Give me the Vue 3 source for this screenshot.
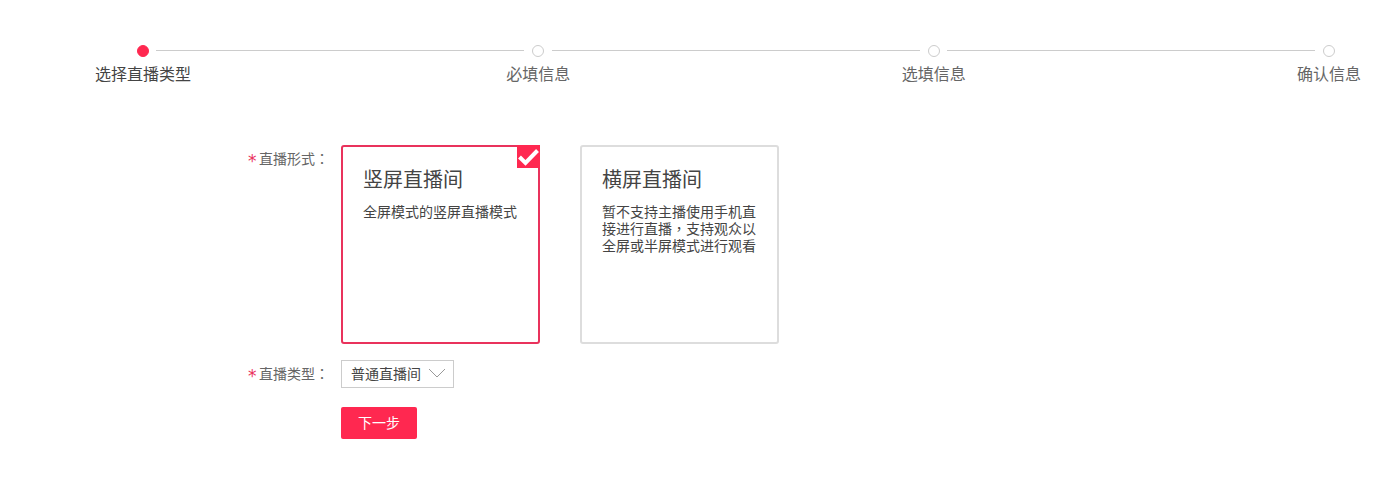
<template>
  <div class="page">
    <div class="steps">
      <template v-for="(step, i) in steps" :key="step">
        <div class="step" :class="{ active: i === 0 }">
          <span class="dot"></span>
          <span class="step-name">{{ step }}</span>
        </div>
        <span v-if="i < steps.length - 1" class="line"></span>
      </template>
    </div>

    <div class="form">
      <div class="form-row">
        <label class="form-label"><i>*</i>直播形式<span class="punct">：</span></label>
        <div class="cards">
          <div
            v-for="(card, i) in cards"
            :key="card.title"
            class="card"
            :class="{ selected: i === selected }"
            @click="selected = i"
          >
            <span v-if="i === selected" class="check">
              <svg width="23" height="23" viewBox="0 0 23 23">
                <path d="M2.5 12 L8.5 18 L20.5 5.5" fill="none" stroke="#fff" stroke-width="4" />
              </svg>
            </span>
            <h3>{{ card.title }}</h3>
            <p>
              <template v-for="(part, n) in card.desc" :key="n">
                <span v-if="n > 0" class="punct">，</span>{{ part }}
              </template>
            </p>
          </div>
        </div>
      </div>

      <div class="form-row type-row">
        <label class="form-label"><i>*</i>直播类型<span class="punct">：</span></label>
        <div class="select">
          <span>普通直播间</span>
          <svg width="18" height="10" viewBox="0 0 18 10">
            <path d="M1 1 L9 9 L17 1" fill="none" stroke="#999" stroke-width="1" />
          </svg>
        </div>
      </div>

      <button class="next-btn">下一步</button>
    </div>
  </div>
</template>

<script setup>
import { ref } from 'vue'

const steps = ['选择直播类型', '必填信息', '选填信息', '确认信息']

// desc is split on the comma so it can use the centred punctuation glyph
const cards = [
  { title: '竖屏直播间', desc: ['全屏模式的竖屏直播模式'] },
  { title: '横屏直播间', desc: ['暂不支持主播使用手机直接进行直播', '支持观众以全屏或半屏模式进行观看'] }
]

const selected = ref(0)
</script>

<style scoped>
.page {
  height: 493px;
  overflow: hidden;
  background: #fff;
  font-family: "Noto Sans CJK SC", "Liberation Sans", sans-serif;
  color: #444;
}

.steps {
  display: flex;
  align-items: flex-start;
  padding: 45px 45px 0 137px;
}

.step {
  width: 12px;
  display: flex;
  flex-direction: column;
  align-items: center;
  flex-shrink: 0;
}

.dot {
  width: 12px;
  height: 12px;
  box-sizing: border-box;
  border: 1px solid #ccc;
  border-radius: 50%;
  background: #fff;
}

.step.active .dot {
  border-color: #ff2850;
  background: #ff2850;
}

.step-name {
  margin-top: 4px;
  line-height: 24px;
  font-size: 16px;
  white-space: nowrap;
  color: #666;
}

.step.active .step-name {
  color: #444;
}

.line {
  flex: 1;
  height: 1px;
  margin: 5px 8px 0 7.45px;
  background: #ccc;
}

.form {
  padding: 60px 0 0 248px;
}

.form-row {
  display: flex;
  align-items: flex-start;
}

.form-label {
  width: 93px;
  flex-shrink: 0;
  padding-top: 3px;
  line-height: 20px;
  font-size: 14px;
  color: #666;
}

.form-label i {
  display: inline-block;
  width: 11px;
  font-family: "DejaVu Sans", sans-serif;
  font-size: 17px;
  line-height: 14px;
  font-style: normal;
  vertical-align: -3px;
  color: #e9325c;
}

.punct {
  font-family: "Noto Sans CJK TC", sans-serif;
}

.cards {
  display: flex;
  gap: 40px;
}

.card {
  position: relative;
  width: 199px;
  height: 199px;
  box-sizing: border-box;
  padding: 18px 20px 0;
  border: 2px solid #ddd;
  border-radius: 3px;
  cursor: pointer;
}

.card.selected {
  border-color: #e9325c;
}

.card h3 {
  margin: 0;
  line-height: 28px;
  font-size: 20px;
  font-weight: 400;
  color: #444;
}

.card p {
  margin: 10px 0 0;
  line-height: 17px;
  font-size: 14px;
  color: #444;
}

.check {
  position: absolute;
  top: -2px;
  right: -2px;
  display: flex;
  width: 23px;
  height: 23px;
  background: #ff2850;
}

.type-row {
  margin-top: 16px;
}

.select {
  display: flex;
  align-items: center;
  justify-content: space-between;
  width: 113px;
  height: 28px;
  box-sizing: border-box;
  padding: 0 7px 2px 9px;
  border: 1px solid #ccc;
  font-size: 14px;
  color: #444;
}

.next-btn {
  display: block;
  width: 76px;
  height: 32px;
  margin: 19px 0 0 93px;
  padding: 0 0 2px;
  border: none;
  border-radius: 2px;
  background: #ff2850;
  color: #fff;
  font-family: inherit;
  font-size: 14px;
  cursor: pointer;
}
</style>
